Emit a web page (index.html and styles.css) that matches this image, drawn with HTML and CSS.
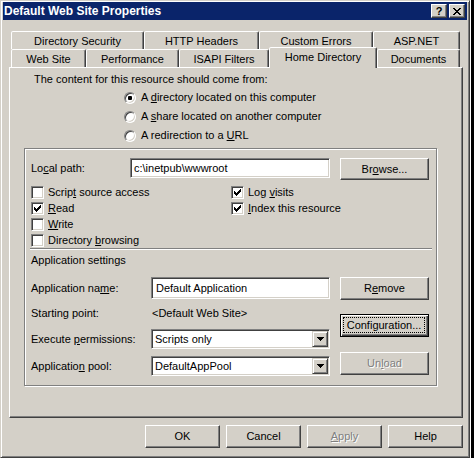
FILE: index.html
```html
<!DOCTYPE html>
<html>
<head>
<meta charset="utf-8">
<title>Default Web Site Properties</title>
<link rel="stylesheet" href="styles.css">
</head>
<body>
<div class="screen">
  <div class="window">
    <div class="titlebar">
      <span class="title">Default Web Site Properties</span>
      <span class="cap-btn help">?</span>
      <span class="cap-btn close"><svg width="8" height="7" viewBox="0 0 8 7" shape-rendering="crispEdges"><path fill="#000" d="M0 0h2v1h-2z M6 0h2v1h-2z M1 1h2v1h-2z M5 1h2v1h-2z M2 2h4v1h-4z M3 3h2v1h-2z M2 4h4v1h-4z M1 5h2v1h-2z M5 5h2v1h-2z M0 6h2v1h-2z M6 6h2v1h-2z"/></svg></span>
    </div>
    <div class="content">
      <div class="tabs">
        <div class="tabrow">
          <div class="tab t-dirsec">Directory Security</div>
          <div class="tab t-http">HTTP Headers</div>
          <div class="tab t-errors">Custom Errors</div>
          <div class="tab t-asp">ASP.NET</div>
        </div>
        <div class="tabrow">
          <div class="tab t-site">Web Site</div>
          <div class="tab t-perf">Performance</div>
          <div class="tab t-isapi">ISAPI Filters</div>
          <div class="tab t-home selected">Home Directory</div>
          <div class="tab t-docs">Documents</div>
        </div>
      </div>
      <div class="panel">
        <p class="intro">The content for this resource should come from:</p>
        <div class="radios">
          <div class="radio-row"><span class="radio checked"></span><span>A <u>d</u>irectory located on this computer</span></div>
          <div class="radio-row"><span class="radio"></span><span>A <u>s</u>hare located on another computer</span></div>
          <div class="radio-row"><span class="radio"></span><span>A redirection to a <u>U</u>RL</span></div>
        </div>
        <div class="frame">
          <div class="path-row">
            <span class="path-label">Lo<u>c</u>al path:</span>
            <span class="textbox path-box">c:\inetpub\wwwroot</span>
            <span class="btn browse">Br<u>o</u>wse...</span>
          </div>
          <div class="checks">
            <div class="check-col col-left">
              <div class="check"><span class="cbox"></span><span>Scrip<u>t</u> source access</span></div>
              <div class="check"><span class="cbox"><svg width="7" height="7" viewBox="0 0 7 7" shape-rendering="crispEdges"><path fill="#000" d="M6 0h1v1h-1z M5 1h2v1h-2z M0 2h1v1h-1z M4 2h3v1h-3z M0 3h2v1h-2z M3 3h3v1h-3z M0 4h5v1h-5z M1 5h3v1h-3z M2 6h1v1h-1z"/></svg></span><span><u>R</u>ead</span></div>
              <div class="check"><span class="cbox"></span><span><u>W</u>rite</span></div>
              <div class="check"><span class="cbox"></span><span>Directory <u>b</u>rowsing</span></div>
            </div>
            <div class="check-col">
              <div class="check"><span class="cbox"><svg width="7" height="7" viewBox="0 0 7 7" shape-rendering="crispEdges"><path fill="#000" d="M6 0h1v1h-1z M5 1h2v1h-2z M0 2h1v1h-1z M4 2h3v1h-3z M0 3h2v1h-2z M3 3h3v1h-3z M0 4h5v1h-5z M1 5h3v1h-3z M2 6h1v1h-1z"/></svg></span><span>Log <u>v</u>isits</span></div>
              <div class="check"><span class="cbox"><svg width="7" height="7" viewBox="0 0 7 7" shape-rendering="crispEdges"><path fill="#000" d="M6 0h1v1h-1z M5 1h2v1h-2z M0 2h1v1h-1z M4 2h3v1h-3z M0 3h2v1h-2z M3 3h3v1h-3z M0 4h5v1h-5z M1 5h3v1h-3z M2 6h1v1h-1z"/></svg></span><span><u>I</u>ndex this resource</span></div>
            </div>
          </div>
          <div class="separator"></div>
          <div class="app-title">Application settings</div>
          <div class="app-area">
            <div class="app-fields">
              <div class="field-row r-name"><span class="flabel">Application na<u>m</u>e:</span><span class="textbox fbox">Default Application</span></div>
              <div class="field-row r-start"><span class="flabel">Starting point:</span><span class="fvalue">&lt;Default Web Site&gt;</span></div>
              <div class="field-row r-exec"><span class="flabel">Execute <u>p</u>ermissions:</span><span class="combo"><span class="combo-text">Scripts only</span><span class="combo-btn"><svg width="7" height="4" viewBox="0 0 7 4" shape-rendering="crispEdges"><path fill="#000" d="M0 0h7v1h-7z M1 1h5v1h-5z M2 2h3v1h-3z M3 3h1v1h-1z"/></svg></span></span></div>
              <div class="field-row r-pool"><span class="flabel">Applicatio<u>n</u> pool:</span><span class="combo"><span class="combo-text">DefaultAppPool</span><span class="combo-btn"><svg width="7" height="4" viewBox="0 0 7 4" shape-rendering="crispEdges"><path fill="#000" d="M0 0h7v1h-7z M1 1h5v1h-5z M2 2h3v1h-3z M3 3h1v1h-1z"/></svg></span></span></div>
            </div>
            <div class="app-buttons">
              <span class="btn b-remove">R<u>e</u>move</span>
              <span class="btn default b-config"><span class="focus">Confi<u>g</u>uration...</span></span>
              <span class="btn disabled b-unload">Un<u>l</u>oad</span>
            </div>
          </div>
        </div>
      </div>
      <div class="footer">
        <span class="btn fbtn">OK</span>
        <span class="btn fbtn">Cancel</span>
        <span class="btn fbtn disabled"><u>A</u>pply</span>
        <span class="btn fbtn">Help</span>
      </div>
    </div>
  </div>
  <div class="edge"></div>
</div>
</body>
</html>
```

FILE: styles.css
```css
* { box-sizing: border-box; }
html, body { margin: 0; padding: 0; }
body {
  background: #fff;
  font-family: "Liberation Sans", Arial, sans-serif;
  font-size: 11px;
  line-height: 13px;
  color: #000;
}
u { text-decoration: underline; }

.screen { display: flex; align-items: flex-start; }
.edge { width: 3px; height: 458px; background: #000; margin-left: 1px; }

.window {
  width: 470px;
  height: 458px;
  background: #d4d0c8;
  border: 1px solid;
  border-color: #d4d0c8 #404040 #404040 #d4d0c8;
  box-shadow: inset 1px 1px 0 #fff, inset -1px -1px 0 #808080;
  padding: 1px 2px 2px 2px;
  display: flex;
  flex-direction: column;
}

.titlebar {
  height: 18px;
  flex: none;
  background: #0a246a;
  display: flex;
  align-items: center;
  padding: 0 2px 0 1px;
  color: #fff;
}
.title { flex: 1; font-weight: bold; font-size: 12px; white-space: nowrap; }
.cap-btn {
  width: 16px;
  height: 14px;
  background: #d4d0c8;
  border: 1px solid;
  border-color: #fff #404040 #404040 #fff;
  box-shadow: inset -1px -1px 0 #808080;
  display: flex;
  align-items: center;
  justify-content: center;
  color: #000;
  font-weight: bold;
  font-size: 11px;
}
.cap-btn.help { margin-right: 2px; }

.content { padding: 11px 4px 0 6px; }

.tabs { padding-left: 2px; }
.tabrow { display: flex; height: 18px; }
.tab {
  height: 18px;
  background: #d4d0c8;
  border: 1px solid;
  border-bottom: 0;
  border-color: #fff #404040 transparent #fff;
  box-shadow: inset -1px 0 0 #808080;
  border-radius: 2px 2px 0 0;
  display: flex;
  align-items: center;
  justify-content: center;
  padding-top: 1px;
  white-space: nowrap;
}
.t-dirsec { width: 133px; }
.t-http { width: 115px; }
.t-errors { width: 114px; }
.t-asp { width: 87px; }
.t-site { width: 75px; }
.t-perf { width: 93px; }
.t-isapi { width: 90px; }
.t-home { width: 108px; }
.t-docs { width: 83px; }
.tab.selected {
  height: 21px;
  margin-top: -2px;
  position: relative;
  z-index: 1;
  padding-bottom: 2px;
}

.panel {
  width: 454px;
  height: 351px;
  border: 1px solid;
  border-color: #fff #404040 #404040 #fff;
  box-shadow: inset -1px -1px 0 #808080;
}
.intro { margin: 5px 0 0 24px; }
.radios { margin: 2px 0 0 114px; display: flex; flex-direction: column; }
.radio-row { height: 19px; display: flex; align-items: center; gap: 5px; }
.radio {
  width: 12px;
  height: 12px;
  flex: none;
  border-radius: 50%;
  background: #fff;
  border: 1px solid;
  border-color: #808080 #fff #fff #808080;
  box-shadow: inset 1px 1px 0 #404040, inset -1px -1px 0 #d4d0c8;
  display: flex;
  align-items: center;
  justify-content: center;
}
.radio.checked::after {
  content: "";
  width: 4px;
  height: 4px;
  border-radius: 1px;
  background: #000;
}

.frame {
  margin: 3px 0 0 14px;
  width: 413px;
  height: 238px;
  border: 1px solid #808080;
  box-shadow: inset 1px 1px 0 #fff, 1px 1px 0 #fff;
  padding: 9px 0 0 6px;
}

.textbox {
  background: #fff;
  border: 1px solid;
  border-color: #808080 #fff #fff #808080;
  box-shadow: inset 1px 1px 0 #404040, inset -1px -1px 0 #d4d0c8;
  padding: 0 3px;
  display: flex;
  align-items: center;
  white-space: nowrap;
}

.path-row { display: flex; align-items: flex-start; height: 22px; }
.path-label { width: 99px; line-height: 20px; }
.path-box { width: 200px; height: 20px; }
.btn {
  display: flex;
  align-items: center;
  justify-content: center;
  background: #d4d0c8;
  border: 1px solid;
  border-color: #fff #404040 #404040 #fff;
  box-shadow: inset -1px -1px 0 #808080;
  white-space: nowrap;
}
.browse { width: 89px; height: 22px; margin-left: 10px; }

.checks { display: flex; margin-top: 6px; }
.check-col { display: flex; flex-direction: column; gap: 3px; }
.col-left { width: 200px; }
.check { display: flex; align-items: center; gap: 4px; height: 13px; }
.cbox {
  width: 13px;
  height: 13px;
  flex: none;
  background: #fff;
  border: 1px solid;
  border-color: #808080 #fff #fff #808080;
  box-shadow: inset 1px 1px 0 #404040, inset -1px -1px 0 #d4d0c8;
  display: flex;
  align-items: center;
  justify-content: center;
}
.cbox svg { display: block; }

.separator {
  width: 402px;
  height: 2px;
  margin: 1px 0 0 -1px;
  border-top: 1px solid #808080;
  border-bottom: 1px solid #fff;
}
.app-title { margin-top: 4px; }

.app-area { display: flex; margin-top: 10px; }
.app-fields { width: 299px; display: flex; flex-direction: column; }
.field-row { display: flex; align-items: center; }
.flabel { width: 120px; flex: none; }
.r-name { height: 22px; }
.r-start { height: 20px; margin-top: 4px; }
.r-exec { height: 20px; margin-top: 6px; }
.r-pool { height: 20px; margin-top: 7px; }
.fbox { width: 179px; height: 22px; padding-left: 4px; }
.fvalue { padding-left: 1px; }

.combo {
  width: 179px;
  height: 20px;
  background: #fff;
  border: 1px solid;
  border-color: #808080 #fff #fff #808080;
  box-shadow: inset 1px 1px 0 #404040, inset -1px -1px 0 #d4d0c8;
  display: flex;
  align-items: center;
  padding: 1px;
}
.combo-text { flex: 1; padding-left: 2px; }
.combo-btn {
  width: 16px;
  height: 16px;
  background: #d4d0c8;
  border: 1px solid;
  border-color: #d4d0c8 #404040 #404040 #d4d0c8;
  box-shadow: inset 1px 1px 0 #fff, inset -1px -1px 0 #808080;
  display: flex;
  align-items: center;
  justify-content: center;
}
.combo-btn svg { display: block; }

.app-buttons { margin-left: 10px; width: 89px; display: flex; flex-direction: column; }
.b-remove { height: 23px; }
.b-config { height: 23px; margin-top: 14px; }
.b-unload { height: 23px; margin-top: 15px; }
.btn.default {
  border: 1px solid #000;
  box-shadow: inset 1px 1px 0 #fff, inset -1px -1px 0 #404040, inset -2px -2px 0 #808080;
  padding: 2px 3px 3px 2px;
}
.focus {
  align-self: stretch;
  flex: 1;
  border: 1px dotted #000;
  display: flex;
  align-items: center;
  justify-content: center;
}
.disabled { color: #808080; text-shadow: 1px 1px 0 #fff; }

.footer { display: flex; justify-content: flex-end; gap: 6px; margin-top: 7px; }
.fbtn { width: 75px; height: 23px; }
```
